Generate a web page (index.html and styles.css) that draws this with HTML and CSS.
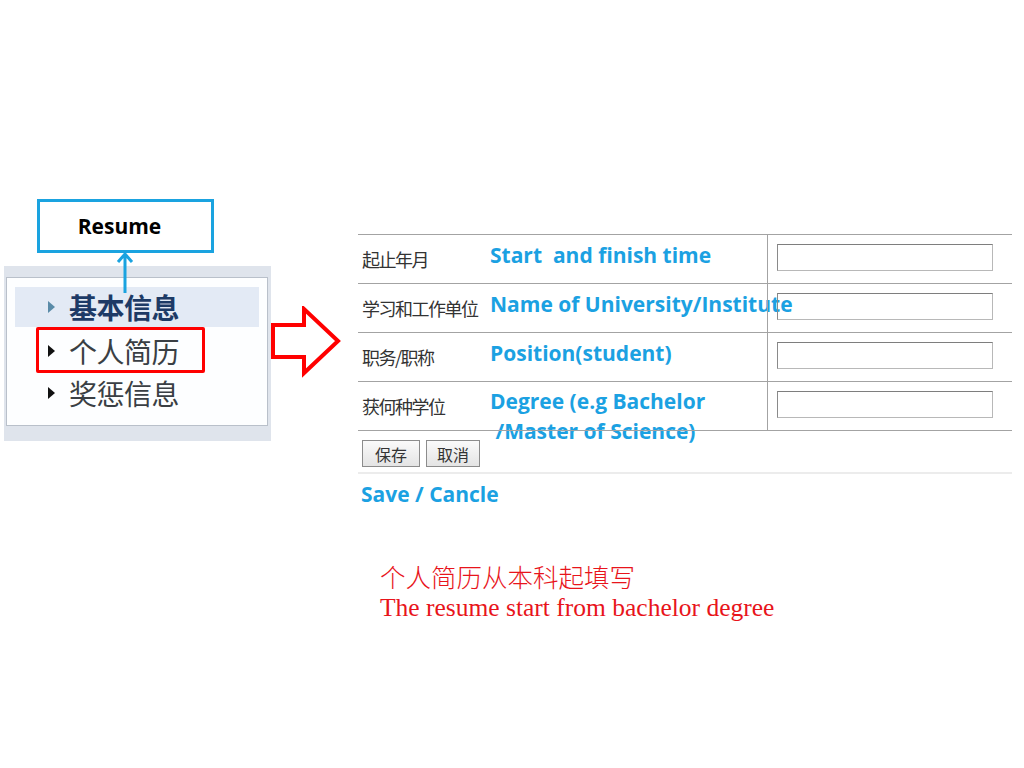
FILE: index.html
```html
<!DOCTYPE html>
<html lang="zh">
<head>
<meta charset="utf-8">
<title>Resume</title>
<link rel="stylesheet" href="styles.css">
</head>
<body>
<div class="slide">
  <div class="menu">
    <div class="menu-inner">
      <div class="menu-item active"><span class="tri"></span>基本信息</div>
      <div class="menu-item"><span class="tri"></span>个人简历</div>
      <div class="menu-item"><span class="tri"></span>奖惩信息</div>
    </div>
  </div>
  <div class="red-box"></div>

  <div class="callout">Resume</div>
  <svg class="up-arrow" width="20" height="44" viewBox="0 0 20 44">
    <path d="M10 42 V3 M3 11 L10 3 L17 11" fill="none" stroke="#1aa3e0" stroke-width="3"/>
  </svg>

  <svg class="big-arrow" width="72" height="72" viewBox="0 0 72 72">
    <path d="M2 19 H33 V3 L67 35 L33 67 V51 H2 Z" fill="#fff" stroke="#f00" stroke-width="4" stroke-linejoin="miter"/>
  </svg>

  <div class="note n1">Start&nbsp; and finish time</div>
  <div class="note n2">Name of University/Institute</div>
  <div class="note n3">Position(student)</div>
  <div class="note n4">Degree (e.g Bachelor<br>&nbsp;/Master of Science)</div>
  <div class="note n5">Save / Cancle</div>

  <div class="form">
    <div class="row"><div class="label">起止年月</div><div class="field"><span class="input"></span></div></div>
    <div class="row"><div class="label">学习和工作单位</div><div class="field"><span class="input"></span></div></div>
    <div class="row"><div class="label">职务/职称</div><div class="field"><span class="input"></span></div></div>
    <div class="row last"><div class="label">获何种学位</div><div class="field"><span class="input"></span></div></div>
    <div class="buttons"><span class="btn">保存</span><span class="btn">取消</span></div>
  </div>

  <div class="remark">
    <div class="cn">个人简历从本科起填写</div>
    <div class="en">The resume start from bachelor degree</div>
  </div>
</div>
</body>
</html>
```

FILE: styles.css
```css
html, body {
  margin: 0;
  padding: 0;
  background: #fff;
}
.slide {
  position: relative;
  width: 1024px;
  height: 768px;
  overflow: hidden;
  background: #fff;
  font-family: "Noto Sans CJK SC", sans-serif;
}
.callout {
  position: absolute;
  left: 37px;
  top: 199px;
  width: 159px;
  height: 48px;
  padding-right: 12px;
  border: 3px solid #1aa3e0;
  box-sizing: content-box;
  display: flex;
  align-items: center;
  justify-content: center;
  font-family: "Open Sans", Lato, sans-serif;
  font-weight: 700;
  font-size: 21px;
  color: #000;
}
.up-arrow {
  position: absolute;
  left: 115px;
  top: 251px;
}
.menu {
  position: absolute;
  left: 4px;
  top: 266px;
  width: 267px;
  height: 175px;
  background: #dfe4ec;
  box-sizing: border-box;
  padding: 11px 3px 15px 2px;
}
.menu-inner {
  height: 100%;
  background: #fdfeff;
  border: 1px solid #b9c0ca;
  box-sizing: border-box;
  padding: 9px 8px 0 8px;
  display: flex;
  flex-direction: column;
}
.menu-item {
  display: flex;
  align-items: center;
  height: 42px;
  padding-left: 33px;
  font-size: 28px;
  color: #3a3f44;
  letter-spacing: -0.5px;
}
.menu-item.active {
  height: 40px;
  background: #e3eaf5;
  color: #1d3a66;
  font-weight: 700;
  margin-bottom: 3px;
}
.tri {
  width: 0;
  height: 0;
  border-top: 6px solid transparent;
  border-bottom: 6px solid transparent;
  border-left: 7px solid #111;
  margin-right: 14px;
}
.active .tri {
  border-left-color: #5a8ba8;
}
.red-box {
  position: absolute;
  left: 36px;
  top: 327px;
  width: 163px;
  height: 40px;
  border: 3px solid #f00;
  border-radius: 2px;
}
.big-arrow {
  position: absolute;
  left: 271px;
  top: 306px;
}
.form {
  position: absolute;
  left: 358px;
  top: 234px;
  width: 654px;
  display: flex;
  flex-direction: column;
}
.row {
  display: flex;
  height: 48px;
  border-top: 1px solid #a3a3a3;
}
.row.last {
  border-bottom: 1px solid #a3a3a3;
}
.label {
  width: 410px;
  border-right: 1px solid #a3a3a3;
  display: flex;
  align-items: center;
  padding-left: 4px;
  box-sizing: border-box;
  font-size: 18px;
  color: #333;
  letter-spacing: -1.5px;
}
.field {
  flex: 1;
  padding: 9px 0 0 9px;
}
.input {
  display: block;
  width: 214px;
  height: 25px;
  border: 1px solid #b8b8b8;
  border-top-color: #7e7e7e;
  border-left-color: #8a8a8a;
}
.buttons {
  display: flex;
  gap: 6px;
  padding: 9px 0 5px 4px;
  border-bottom: 2px solid #ececec;
}
.btn {
  width: 56px;
  height: 25px;
  border: 1px solid #8c8c8c;
  background: linear-gradient(#fafafa, #e4e4e4);
  display: flex;
  align-items: center;
  justify-content: center;
  font-size: 16px;
  color: #333;
}
.btn + .btn {
  width: 52px;
}
.note {
  position: absolute;
  font-family: "Open Sans", Lato, sans-serif;
  font-weight: 700;
  font-size: 21px;
  line-height: 30px;
  color: #1ba1e2;
  white-space: nowrap;
}
.n1 { left: 490px; top: 240px; }
.n2 { left: 490px; top: 289px; }
.n3 { left: 490px; top: 338px; }
.n4 { left: 490px; top: 386px; }
.n5 { left: 361px; top: 479px; }
.remark {
  position: absolute;
  left: 380px;
  top: 559px;
  color: #e8141b;
  font-family: "Liberation Serif", "Noto Sans CJK SC", serif;
}
.cn {
  font-family: "Noto Sans CJK SC", sans-serif;
  font-weight: 300;
  font-size: 25.5px;
  line-height: 34px;
}
.en {
  font-size: 25.5px;
  line-height: 30px;
}
```
